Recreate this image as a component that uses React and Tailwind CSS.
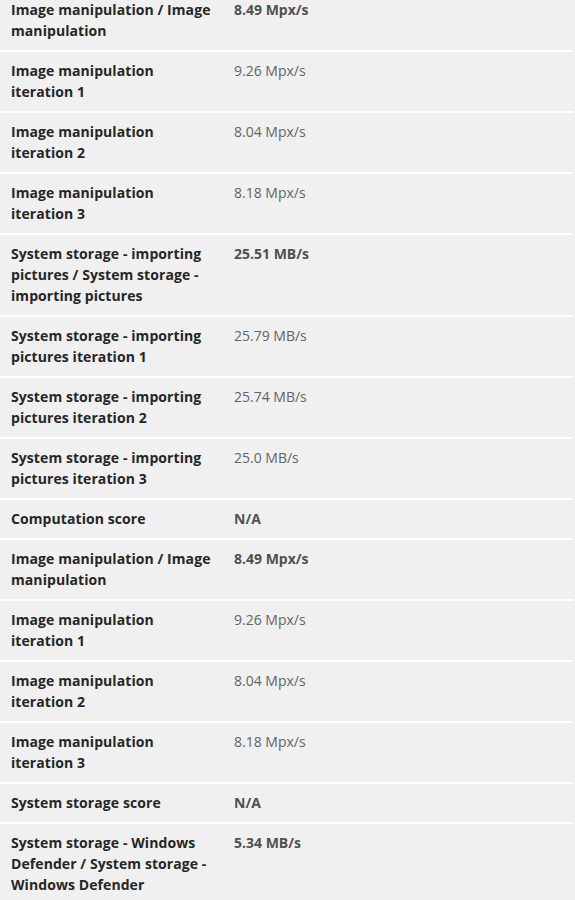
const rows = [
  ['Image manipulation / Image manipulation', '8.49 Mpx/s', true],
  ['Image manipulation iteration 1', '9.26 Mpx/s', false],
  ['Image manipulation iteration 2', '8.04 Mpx/s', false],
  ['Image manipulation iteration 3', '8.18 Mpx/s', false],
  ['System storage - importing pictures / System storage - importing pictures', '25.51 MB/s', true],
  ['System storage - importing pictures iteration 1', '25.79 MB/s', false],
  ['System storage - importing pictures iteration 2', '25.74 MB/s', false],
  ['System storage - importing pictures iteration 3', '25.0 MB/s', false],
  ['Computation score', 'N/A', true],
  ['Image manipulation / Image manipulation', '8.49 Mpx/s', true],
  ['Image manipulation iteration 1', '9.26 Mpx/s', false],
  ['Image manipulation iteration 2', '8.04 Mpx/s', false],
  ['Image manipulation iteration 3', '8.18 Mpx/s', false],
  ['System storage score', 'N/A', true],
  ['System storage - Windows Defender / System storage - Windows Defender', '5.34 MB/s', true],
]

export default function App() {
  return (
    <div className="h-[900px] overflow-hidden bg-[#f0f0f0] font-['Open_Sans',sans-serif] text-[14px] leading-[21px]">
      <div className="-mt-[9px] w-[573px] flex flex-col gap-[2px] bg-white">
        {rows.map(([label, value, bold], i) => (
          <div key={i} className="grid grid-cols-[223px_1fr] bg-[#f0f0f0] pt-2 pb-[9px]">
            <div className="pl-[11px] pr-[10px] font-bold text-[#262626] tracking-[0.08px]">{label}</div>
            <div className={bold ? 'pl-[11px] font-bold text-[#505050]' : 'pl-[11px] text-[#646464]'}>
              {value}
            </div>
          </div>
        ))}
      </div>
    </div>
  )
}
